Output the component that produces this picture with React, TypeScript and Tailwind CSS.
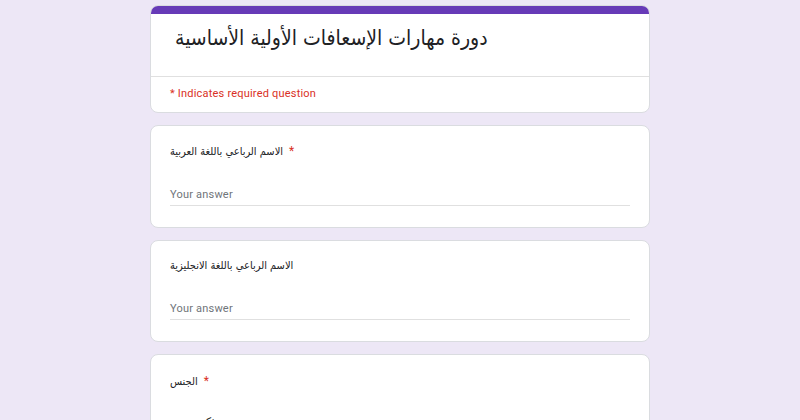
import React from "react";

const FONT = "font-['Roboto','DejaVu_Sans_Condensed','DejaVu_Sans',sans-serif]";
const AR = "font-['DejaVu_Sans_Condensed','DejaVu_Sans',sans-serif]";

const Req = () => <span className="text-[#d93025] ml-[6px] text-[12px] font-['Roboto',sans-serif]">*</span>;

const TextQuestion = ({ label, required }: { label: string; required?: boolean }) => (
  <div className="bg-white rounded-lg border border-[#dadce0] px-[19px] pt-[17px] pb-[21px]">
    <div className="text-[11px] leading-[16px] text-[#202124]" dir="ltr">
      <span dir="rtl" className={AR}>{label}</span>
      {required && <Req />}
    </div>
    <div className="mt-[25px] h-[21px] border-b border-[#e0e0e0] w-[460px] text-[11px] tracking-[0.2px] leading-[20px] text-[#70757a]">
      Your answer
    </div>
  </div>
);

export default function App() {
  return (
    <div className={`min-h-screen bg-[#ede7f6] ${FONT} pt-[5px]`}>
      <div className="w-[500px] ml-[150px] flex flex-col gap-[12px]">
        {/* header card */}
        <div className="bg-white rounded-lg border border-[#dadce0] overflow-hidden">
          <div className="h-[8px] bg-[#673ab7]" />
          <div className="px-[24px] pt-[8px] pb-[22px] border-b border-[#e0e0e0]">
            <h1 className={`text-[21px] leading-[32px] text-[#202124] ${AR}`} dir="rtl" style={{ textAlign: "left" }}>
              دورة مهارات الإسعافات الأولية الأساسية
            </h1>
          </div>
          <div className="px-[19px] pt-[9px] pb-[10px] text-[11px] tracking-[0.2px] leading-[16px] text-[#d93025]">
            * Indicates required question
          </div>
        </div>

        <TextQuestion label="الاسم الرباعي باللغة العربية" required />
        <TextQuestion label="الاسم الرباعي باللغة الانجليزية" />

        <div className="bg-white rounded-lg border border-[#dadce0] px-[19px] pt-[18px] pb-[22px]">
          <div className="text-[11px] leading-[16px] text-[#202124]" dir="ltr">
            <span dir="rtl" className={AR}>الجنس</span>
            <Req />
          </div>
          <div className={`mt-[22px] flex flex-col gap-[14px] text-[12px] text-[#202124] ${AR}`}>
            {["ذكر", "أنثى"].map(o => (
              <label key={o} className="flex items-start gap-[12px] leading-[20px]">
                <span className="w-[18px] h-[18px] rounded-full border-2 border-[#5f6368] mt-[12px]" />
                <span>{o}</span>
              </label>
            ))}
          </div>
        </div>
      </div>
    </div>
  );
}
